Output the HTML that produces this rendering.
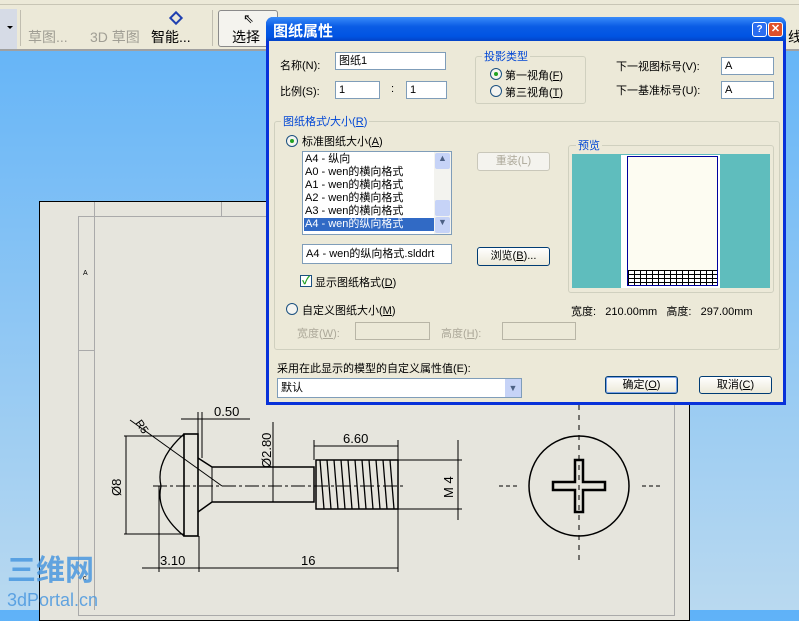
<!DOCTYPE html>
<html><head><meta charset="utf-8"><style>
*{margin:0;padding:0;box-sizing:border-box}
body{width:799px;height:610px;overflow:hidden;position:relative;font-family:"Liberation Sans","Noto Sans CJK SC",sans-serif;font-size:11px;color:#000;background:linear-gradient(#5fb2f8,#b9d9f0)}
.a{position:absolute;white-space:nowrap}
.in{position:absolute;background:#fff;border:1px solid #7f9db9;padding:1px 3px;font-size:11px;line-height:14px}
.btn{position:absolute;border:1px solid #003c74;border-radius:3px;background:linear-gradient(#fff,#ece9d8);text-align:center;font-size:11px;line-height:16px}
.grp{position:absolute;border:1px solid #d0d0bf;border-radius:3px}
.lg{position:absolute;background:#ece9d8;color:#0046d5;padding:0 2px;font-size:11px}
.rad{position:absolute;width:12px;height:12px;border-radius:50%;border:1px solid #1c5180;background:#f4f4f0}
.rad.on::after{content:"";position:absolute;left:3px;top:3px;width:4px;height:4px;border-radius:50%;background:#21a121}
.gray{color:#aca899}
</style></head><body>
<div class="a" style="left:0;top:0;width:799px;height:51px;background:#ece9d8;border-bottom:2px solid #a0a0a0"></div>
<div class="a" style="left:0;top:0;width:799px;height:5px;border-bottom:1px solid #c8c5b5"></div>
<div class="a" style="left:0;top:9px;width:17px;height:40px;background:#d6dbe6"></div>
<div class="a" style="left:7px;top:26px;border:3px solid transparent;border-top:3px solid #000"></div>
<div class="a" style="left:20px;top:10px;width:1px;height:36px;background:#c0bdb0"></div>
<div class="a gray" style="left:28px;top:27px;font-size:14px;color:#a09e94">草图...</div>
<div class="a gray" style="left:90px;top:27px;font-size:14px;color:#a09e94">3D 草图</div>
<div class="a" style="left:151px;top:27px;font-size:14px">智能...</div>
<div class="a" style="left:171px;top:13px;width:10px;height:10px;border:2px solid #2040b0;transform:rotate(45deg)"></div>
<div class="a" style="left:212px;top:10px;width:1px;height:36px;background:#c0bdb0"></div>
<div class="a" style="left:218px;top:10px;width:60px;height:37px;border:1px solid #8a8a8a;border-radius:3px;background:#f4f3ee"></div>
<div class="a" style="left:232px;top:27px;font-size:14px">选择</div>
<div class="a" style="left:243px;top:11px;font-size:13px">⇖</div>
<div class="a" style="left:788px;top:27px;font-size:14px">线</div>
<div class="a" style="left:39px;top:201px;width:651px;height:420px;background:#e6e5dd;border:1px solid #000"></div>
<div class="a" style="left:78px;top:216px;width:597px;height:400px;border:1px solid #aaa"></div>
<div class="a" style="left:94px;top:202px;width:1px;height:408px;background:#aaa"></div>
<div class="a" style="left:78px;top:350px;width:16px;height:1px;background:#aaa"></div>
<div class="a" style="left:221px;top:202px;width:1px;height:14px;background:#aaa"></div>
<div class="a" style="left:83px;top:270px;font-size:7px">A</div>
<div class="a" style="left:83px;top:575px;font-size:7px">c</div>
<svg class="a" style="left:0;top:0" width="799" height="610">
<g stroke="#000" fill="none" stroke-width="1">
<line x1="153" y1="486" x2="403" y2="486" stroke-dasharray="14 3 3 3"/>
<path d="M184 434 Q155 460 161 486 Q155 512 184 536" stroke-width="1.3"/>
<rect x="184" y="434" width="14" height="102" stroke-width="1.6"/>
<path d="M198 458 L212 467 L314 467 L314 502 L212 502 L198 512" stroke-width="1.5"/>
<line x1="212" y1="467" x2="212" y2="502"/>
<rect x="316" y="460" width="82" height="49" stroke-width="1.5"/>
<path d="M320 460 l4 49 M327 460 l4 49 M334 460 l4 49 M341 460 l4 49 M348 460 l4 49 M355 460 l4 49 M362 460 l4 49 M369 460 l4 49 M376 460 l4 49 M383 460 l4 49 M390 460 l4 49" stroke-width="1.3"/>
<line x1="124" y1="436" x2="184" y2="436"/><line x1="124" y1="534" x2="184" y2="534"/>
<line x1="126" y1="436" x2="126" y2="534"/>
<line x1="130" y1="420" x2="222" y2="486"/>
<line x1="159" y1="486" x2="159" y2="572"/><line x1="199" y1="536" x2="199" y2="572"/><line x1="398" y1="509" x2="398" y2="572"/>
<line x1="142" y1="568" x2="398" y2="568"/>
<line x1="181" y1="419" x2="250" y2="419"/><line x1="198" y1="412" x2="198" y2="434"/><line x1="202" y1="412" x2="202" y2="458"/>
<line x1="273" y1="422" x2="273" y2="502"/>
<line x1="314" y1="446" x2="398" y2="446"/><line x1="314" y1="440" x2="314" y2="460"/><line x1="398" y1="440" x2="398" y2="460"/>
<line x1="398" y1="460" x2="462" y2="460"/><line x1="398" y1="509" x2="462" y2="509"/>
<line x1="458" y1="440" x2="458" y2="520"/>
<circle cx="579" cy="486" r="50" stroke-width="1.5"/>
<path d="M575 460 h8 v22 h22 v8 h-22 v22 h-8 v-22 h-22 v-8 h22 z" stroke-width="2.5"/>
<line x1="579" y1="405" x2="579" y2="565" stroke-dasharray="5 5"/>
<line x1="499" y1="486" x2="518" y2="486" stroke-dasharray="4 3"/>
<line x1="642" y1="486" x2="662" y2="486" stroke-dasharray="4 3"/>
</g>
<g font-family="Liberation Sans" font-size="13" fill="#000">
<text x="214" y="416">0.50</text>
<text x="343" y="443">6.60</text>
<text x="160" y="565">3.10</text>
<text x="301" y="565">16</text>
<text transform="translate(121 496) rotate(-90)">Ø8</text>
<text transform="translate(271 468) rotate(-90)">Ø2.80</text>
<text transform="translate(453 498) rotate(-90)">M 4</text>
<text transform="translate(135 423) rotate(55)" font-size="11">R5</text>
</g>
<g fill="#4a98e0" opacity=".85"><text x="7" y="580" font-size="29" font-weight="bold" font-family="Noto Sans CJK SC">三维网</text><text x="7" y="606" font-size="18" font-family="Liberation Sans">3dPortal.cn</text></g>
</svg>
<div class="a" style="left:266px;top:17px;width:520px;height:388px;background:#ece9d8;border:3px solid #0831d9;border-top:none;border-radius:7px 7px 0 0"></div>
<div class="a" style="left:266px;top:17px;width:520px;height:24px;border-radius:7px 7px 0 0;background:linear-gradient(#3a8cf9,#0a5ce5 40%,#0054e3 80%,#0343c7)"></div>
<div class="a" style="left:273px;top:20px;font-size:15px;font-weight:bold;color:#fff">图纸属性</div>
<div class="a" style="left:752px;top:22px;width:15px;height:15px;border:1px solid #fff;border-radius:3px;background:#2a6cf0;color:#fff;font-size:10px;text-align:center;font-weight:bold;line-height:13px">?</div>
<div class="a" style="left:768px;top:22px;width:15px;height:15px;border:1px solid #fff;border-radius:3px;background:#e0502a;color:#fff;font-size:11px;text-align:center;font-weight:bold;line-height:13px">✕</div>
<div class="a" style="left:280px;top:57px">名称(N):</div>
<div class="in" style="left:335px;top:52px;width:111px;height:18px">图纸1</div>
<div class="a" style="left:280px;top:83px">比例(S):</div>
<div class="in" style="left:335px;top:81px;width:45px;height:18px">1</div>
<div class="a" style="left:391px;top:83px">:</div>
<div class="in" style="left:406px;top:81px;width:41px;height:18px">1</div>
<div class="grp" style="left:475px;top:56px;width:111px;height:48px"></div>
<div class="lg" style="left:482px;top:48px">投影类型</div>
<div class="rad on" style="left:490px;top:68px"></div><div class="a" style="left:505px;top:67px">第一视角(<u>F</u>)</div>
<div class="rad" style="left:490px;top:85px"></div><div class="a" style="left:505px;top:84px">第三视角(<u>T</u>)</div>
<div class="a" style="left:616px;top:58px">下一视图标号(V):</div>
<div class="in" style="left:721px;top:57px;width:53px;height:18px">A</div>
<div class="a" style="left:616px;top:82px">下一基准标号(U):</div>
<div class="in" style="left:721px;top:81px;width:53px;height:18px">A</div>
<div class="grp" style="left:274px;top:121px;width:506px;height:229px"></div>
<div class="lg" style="left:281px;top:113px">图纸格式/大小(<u>R</u>)</div>
<div class="rad on" style="left:286px;top:135px"></div><div class="a" style="left:302px;top:133px">标准图纸大小(<u>A</u>)</div>
<div class="a" style="left:302px;top:151px;width:150px;height:84px;background:#fff;border:1px solid #7f9db9"></div>
<div class="a" style="left:305px;top:153px;line-height:13px">A4 - 纵向<br>A0 - wen的横向格式<br>A1 - wen的横向格式<br>A2 - wen的横向格式<br>A3 - wen的横向格式</div>
<div class="a" style="left:304px;top:218px;width:130px;height:13px;background:#316ac5;color:#fff;line-height:13px;padding-left:1px">A4 - wen的纵向格式</div>
<div class="a" style="left:434px;top:152px;width:17px;height:82px;background:#f3f3ef"></div>
<div class="a" style="left:435px;top:153px;width:15px;height:16px;background:#c6d3f7;border-radius:2px;font-size:9px;text-align:center;color:#4d6185">▲</div>
<div class="a" style="left:435px;top:200px;width:15px;height:16px;background:#c6d3f7;border-radius:2px"></div>
<div class="a" style="left:435px;top:217px;width:15px;height:16px;background:#c6d3f7;border-radius:2px;font-size:9px;text-align:center;color:#4d6185">▼</div>
<div class="btn" style="left:477px;top:152px;width:73px;height:19px;border-color:#c9c7ba;color:#aca899;background:#f4f3ee">重装(L)</div>
<div class="grp" style="left:568px;top:145px;width:206px;height:148px"></div>
<div class="lg" style="left:576px;top:137px">预览</div>
<div class="a" style="left:572px;top:154px;width:198px;height:134px;background:#5fbdbd"></div>
<div class="a" style="left:621px;top:155px;width:99px;height:133px;background:#fff"></div>
<div class="a" style="left:627px;top:156px;width:91px;height:130px;border:1px solid #0000a0;background:#fdfcf2"></div>
<div class="a" style="left:628px;top:270px;width:89px;height:15px;border-top:1px solid #000;background:repeating-linear-gradient(90deg,#000 0 1px,transparent 1px 6px),repeating-linear-gradient(#fff 0 3px,#000 3px 4px)"></div>
<div class="in" style="left:302px;top:244px;width:150px;height:20px;line-height:16px">A4 - wen的纵向格式.slddrt</div>
<div class="btn" style="left:477px;top:247px;width:73px;height:19px">浏览(<u>B</u>)...</div>
<div class="a" style="left:300px;top:275px;width:12px;height:12px;border:1px solid #1c5180;background:#fff;color:#21a121;font-size:11px;line-height:10px;text-align:center;font-weight:bold">✓</div>
<div class="a" style="left:315px;top:274px">显示图纸格式(<u>D</u>)</div>
<div class="rad" style="left:286px;top:303px"></div><div class="a" style="left:302px;top:302px">自定义图纸大小(<u>M</u>)</div>
<div class="a gray" style="left:297px;top:325px">宽度(<u>W</u>):</div>
<div class="a" style="left:355px;top:322px;width:75px;height:18px;border:1px solid #b8b5a6"></div>
<div class="a gray" style="left:441px;top:325px">高度(<u>H</u>):</div>
<div class="a" style="left:502px;top:322px;width:74px;height:18px;border:1px solid #b8b5a6"></div>
<div class="a" style="left:571px;top:303px">宽度:&nbsp;&nbsp; 210.00mm&nbsp;&nbsp; 高度:&nbsp;&nbsp; 297.00mm</div>
<div class="a" style="left:277px;top:360px">采用在此显示的模型的自定义属性值(E):</div>
<div class="in" style="left:277px;top:378px;width:245px;height:20px;line-height:16px">默认</div>
<div class="a" style="left:505px;top:379px;width:16px;height:18px;background:#c6d3f7;font-size:9px;text-align:center;line-height:18px;color:#4d6185">▼</div>
<div class="btn" style="left:605px;top:376px;width:73px;height:18px;box-shadow:inset 0 0 0 1px #7ba2e7">确定(<u>O</u>)</div>
<div class="btn" style="left:699px;top:376px;width:73px;height:18px">取消(<u>C</u>)</div>
</body></html>
